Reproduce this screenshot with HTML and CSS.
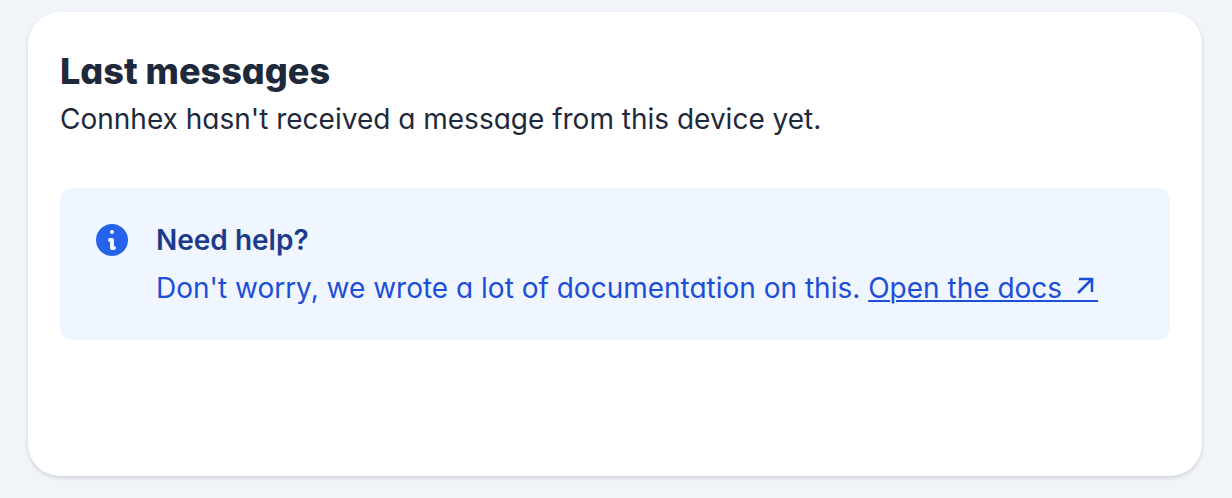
FILE: index.html
```
<!DOCTYPE html>
<html lang="en">
<head>
    <meta charset="UTF-8">
    <meta name="viewport" content="width=device-width, initial-scale=1.0">
    <title>Last messages</title>
    <link rel="stylesheet" href="styles.css">
</head>
<body>
    <section class="card">
        <h2 class="card-title">Last messages</h2>
        <p class="card-text">Connhex hasn't received a message from this device yet.</p>

        <div class="help">
            <svg class="help-icon" viewBox="0 0 20 20" aria-hidden="true">
                <path fill="currentColor" fill-rule="evenodd" clip-rule="evenodd" d="M18 10a8 8 0 11-16 0 8 8 0 0116 0zm-7-4a1 1 0 11-2 0 1 1 0 012 0zM9 9a1 1 0 000 2v3a1 1 0 001 1h1a1 1 0 100-2v-3a1 1 0 00-1-1H9z"/>
            </svg>
            <div class="help-body">
                <h3 class="help-title">Need help?</h3>
                <p class="help-text">Don't worry, we wrote a lot of documentation on this. <a class="help-link" href="#">Open the docs <span class="arrow">&emsp;<svg class="arrow-icon" viewBox="0 0 28 28" aria-hidden="true"><path d="M8 22L22 8M9 8h13v13" fill="none" stroke="currentColor" stroke-width="2.5"/></svg></span></a></p>
            </div>
        </div>
    </section>
</body>
</html>
```
FILE: styles.css
```
* {
    box-sizing: border-box;
}

body {
    margin: 0;
    min-height: 100vh;
    padding: 12px 30px 22px 28px;
    display: flex;
    background: #f1f5f9;
    color: #1e293b;
    font-family: Inter, 'Open Sans', sans-serif;
    font-feature-settings: 'cv11';
    font-size: 28px;
    line-height: 40px;
}

h2, h3, p {
    margin: 0;
}

.card {
    flex: 1;
    padding: 35px 32px;
    background: #fff;
    border-radius: 32px;
    box-shadow: 0 2px 4px rgba(0, 0, 0, 0.14);
}

.card-title {
    font-size: 36px;
    font-weight: 800;
    line-height: 48px;
}

.card-text {
    margin-top: 4px;
}

.help {
    display: flex;
    gap: 24px;
    margin-top: 49px;
    padding: 32px;
    background: #eff6ff;
    border-radius: 12px;
    color: #1d4ed8;
}

.help-icon {
    flex: none;
    width: 40px;
    height: 40px;
    color: #2563eb;
}

.help-title {
    color: #1e3a8a;
    font-size: 28px;
    font-weight: 600;
}

.help-text {
    margin-top: 8px;
}

.help-link {
    color: inherit;
    text-decoration: underline;
    text-decoration-thickness: 2px;
    text-underline-offset: 2px;
}

/* the em space keeps the underline running below the arrow */
.arrow {
    position: relative;
}

.arrow-icon {
    position: absolute;
    top: 0;
    left: 0;
    width: 28px;
    height: 28px;
}
```
